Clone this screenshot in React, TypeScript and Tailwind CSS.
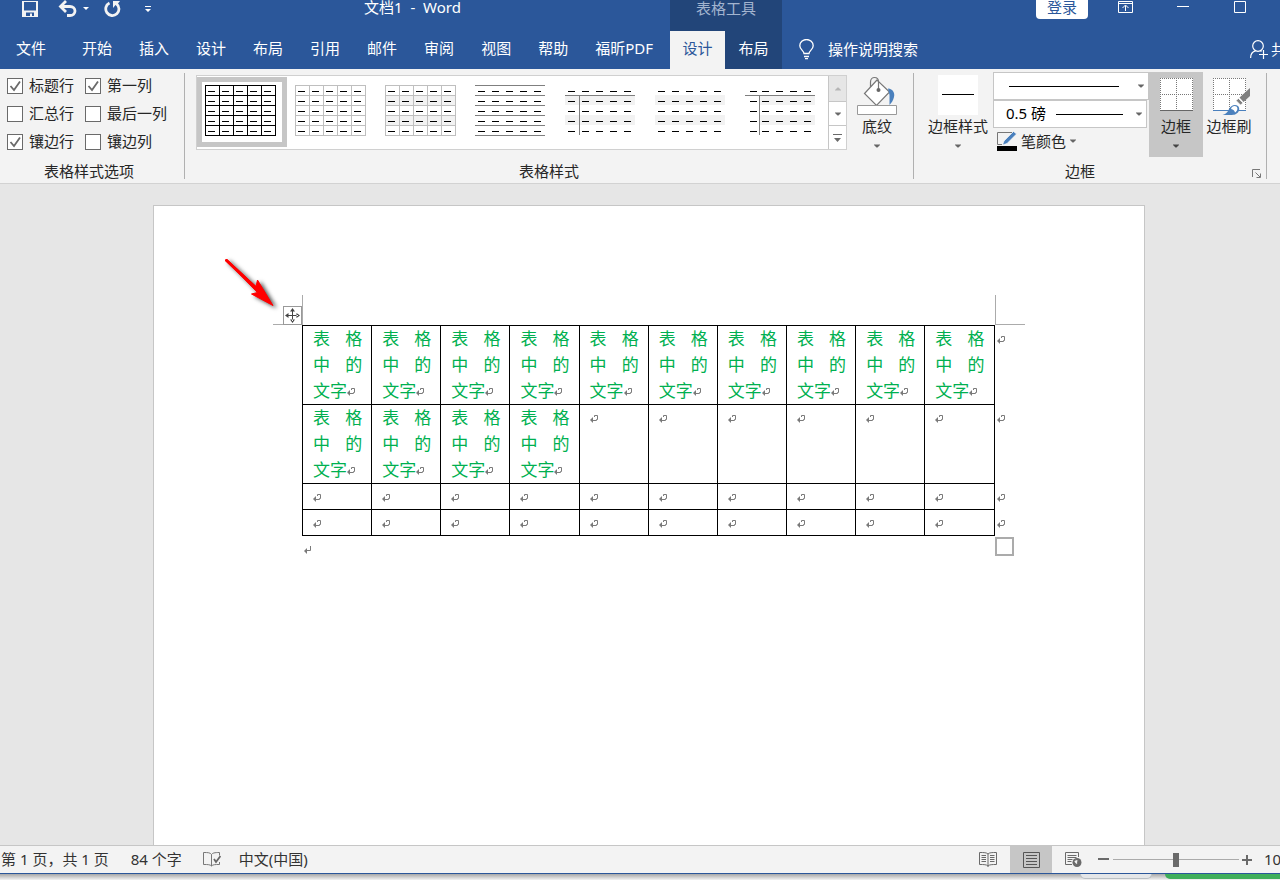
import React from 'react';

const TABS = ['开始', '插入', '设计', '布局', '引用', '邮件', '审阅', '视图', '帮助', '福昕PDF'];

const OPTIONS = [
  { label: '标题行', on: true },
  { label: '第一列', on: true },
  { label: '汇总行', on: false },
  { label: '最后一列', on: false },
  { label: '镶边行', on: true },
  { label: '镶边列', on: false },
];

type Style = { name: string; grid?: string; rows?: string; header?: boolean; bands?: boolean; inset?: boolean };

const STYLES: Style[] = [
  { name: '网格型', grid: '#000000' },
  { name: '网格型浅色', grid: '#bfbfbf' },
  { name: '无格式表格 1', grid: '#bfbfbf', bands: true },
  { name: '无格式表格 2', rows: '#7f7f7f' },
  { name: '无格式表格 3', header: true, bands: true },
  { name: '无格式表格 4', bands: true },
  { name: '无格式表格 5', header: true, bands: true, inset: true },
];

const CELL = '表格中的文字';
const ROWS: string[][] = [
  Array(10).fill(CELL),
  [...Array(4).fill(CELL), ...Array(6).fill('')],
  Array(10).fill(''),
  Array(10).fill(''),
];

const STEPS = [0, 1, 2, 3, 4];
const LINES = [0, 1, 2, 3, 4, 5];

function Thumb({ style }: { style: Style }) {
  return (
    <svg width="71" height="51" viewBox="0 0 71 51" shapeRendering="crispEdges" aria-hidden="true">
      {style.bands &&
        [10, 30].map((y) => (
          <rect key={y} x={style.inset ? 15 : 0} y={y} width={style.inset ? 55 : 70} height="10" fill="#f2f2f2" />
        ))}
      {style.grid &&
        LINES.map((i) => (
          <g key={i} fill={style.grid}>
            <rect x="0" y={i * 10} width="71" height="1" />
            <rect x={i * 14} y="0" width="1" height="51" />
          </g>
        ))}
      {style.rows && LINES.map((i) => <rect key={i} x="0" y={i * 10} width="70" height="1" fill={style.rows} />)}
      {style.header && (
        <g fill="#7f7f7f">
          <rect x="0" y="10" width="70" height="1" />
          <rect x="14" y="10" width="1" height="40" />
        </g>
      )}
      {STEPS.map((r) =>
        STEPS.map((c) => (
          <rect key={`${r}${c}`} x={c * 14 + (style.inset && c === 0 ? 5 : 3)} y={r * 10 + 6} width="7" height="1" fill="#000" />
        )),
      )}
    </svg>
  );
}

function Caret({ className = '' }: { className?: string }) {
  return (
    <svg className={className} width="6" height="4" viewBox="0 0 6 4" aria-hidden="true">
      <path d="M0 .5h6v.5L3.500 3.500h-1L0 1z" fill="currentColor" />
    </svg>
  );
}

function Mark({ plain = false }: { plain?: boolean }) {
  return (
    <svg className="inline-block align-baseline" width="8" height="9" viewBox="0 0 8 9" fill="none" aria-hidden="true">
      <path d={plain ? 'M6.500 0v4.500H2' : 'M4.500 2V.500h3v4H6.500V5.500H2'} stroke="#7a7a7a" />
      <path d="M0 5L3 2v6z" fill="#7a7a7a" />
    </svg>
  );
}

function DottedGrid() {
  return (
    <g shapeRendering="crispEdges">
      <rect x="0" y="0" width="33" height="33" fill="#fff" />
      <path d="M0 .5h33M0 16.5h33M.5 0v32M16.5 0v32M32.5 0v32" stroke="#777" strokeDasharray="1 1" fill="none" />
    </g>
  );
}

function Header() {
  return (
    <header className="flex overflow-hidden bg-[#2b579a] text-white">
      <div className="flex w-[670px] shrink-0 flex-col">
        <div className="flex h-[31px] items-start">
          <button type="button" aria-label="保存" className="ml-[22px]">
            <svg width="16" height="17" viewBox="0 0 16 17" fill="none">
              <path d="M0 1h16v16H0z" fill="#f3f3f3" />
              <path d="M2 2h12v8.500H2zM4 12.500h8V16h-2v-2.500H8V16H4z" fill="#2b579a" />
            </svg>
          </button>
          <button type="button" aria-label="撤消" className="ml-5 flex items-center gap-[6px]">
            <svg width="19" height="17" viewBox="0 0 19 17" fill="none">
              <path d="M4 6.500h8c3 0 5 2 5 4.500s-2 4.500-5 4.500H9" stroke="#f3f3f3" strokeWidth="2.800" />
              <path d="M8 1L2.500 6.500 8 12" stroke="#f3f3f3" strokeWidth="2.800" />
            </svg>
            <svg width="6" height="3" viewBox="0 0 6 3"><path d="M0 0h6L3 3z" fill="#fff" /></svg>
          </button>
          <button type="button" aria-label="重复" className="ml-[15px]">
            <svg width="17" height="17" viewBox="0 0 17 17" fill="none">
              <path d="M5.500 3A6.600 6.600 0 1 0 12.500 3.800" stroke="#f3f3f3" strokeWidth="2.800" />
              <path d="M9 1h7L14 3.500V5h-2.500l-2.500 3z" fill="#f3f3f3" />
            </svg>
          </button>
          <button type="button" aria-label="自定义快速访问工具栏" className="ml-6 mt-[6px]">
            <svg width="6" height="6" viewBox="0 0 6 6"><path d="M0 0h6v1H0zM0 3h6L3 6z" fill="#fff" /></svg>
          </button>
          <h1 className="ml-[213px] whitespace-pre text-[15px] leading-[14px]">文档1  -  Word</h1>
        </div>
        <nav className="flex h-[38px] items-center gap-[27px] pb-1 pl-4 text-[15px] leading-5">
          <a href="#file" className="mr-[9px]">文件</a>
          {TABS.map((t) => (
            <a key={t} href={`#${t}`} className="whitespace-nowrap">{t}</a>
          ))}
        </nav>
      </div>
      <div className="flex w-28 shrink-0 flex-col bg-[#224579] text-[15px]">
        <div className="h-[31px] text-center leading-4 text-[#a3b4cf]">表格工具</div>
        <nav className="flex h-[38px] leading-[34px]">
          <a href="#table-design" className="w-[55px] bg-[#f3f3f3] text-center text-[#2b579a]">设计</a>
          <a href="#table-layout" className="w-[57px] text-center">布局</a>
        </nav>
      </div>
      <div className="flex min-w-0 flex-1 flex-col text-[15px]">
        <div className="flex h-[31px] items-start justify-end pr-[34px]">
          <button type="button" className="h-[19px] w-[52px] rounded-b-sm bg-white pb-[5px] leading-[14px] text-[#2b579a]">登录</button>
          <button type="button" aria-label="功能区显示选项" className="ml-[30px] mt-px">
            <svg width="15" height="12" viewBox="0 0 15 12" fill="none" stroke="#fff">
              <path d="M.5.500h14v11H.5zM.5 2.500h14M7.500 10V4.500M4.500 7l3-3 3 3" />
            </svg>
          </button>
          <button type="button" aria-label="最小化" className="ml-11 mt-[6px]">
            <svg width="12" height="1" viewBox="0 0 12 1"><path d="M0 0h12v1H0z" fill="#fff" /></svg>
          </button>
          <button type="button" aria-label="最大化" className="ml-[45px] mt-px">
            <svg width="12" height="12" viewBox="0 0 12 12" fill="none"><path d="M.5.500h11v11H.5z" stroke="#fff" /></svg>
          </button>
        </div>
        <div className="flex h-[38px] items-center pb-[2px] pl-4 leading-5">
          <button type="button" className="flex items-center gap-[13px] whitespace-nowrap">
            <svg width="17" height="21" viewBox="0 0 17 21" fill="none" stroke="#fff" strokeWidth="1.300">
              <path d="M6 14.500c0-2.500-4.200-4-4.200-7.700a6.700 6.300 0 0 1 13.400 0c0 3.700-4.200 5.200-4.200 7.700zM6 17.500h5M7 19.700h3" />
            </svg>
            操作说明搜索
          </button>
          <button type="button" className="ml-auto flex w-[30px] shrink-0 items-center gap-[3px] overflow-hidden whitespace-nowrap">
            <svg className="shrink-0" width="18" height="19" viewBox="0 0 18 19" fill="none" stroke="#fff" strokeWidth="1.200">
              <circle cx="8" cy="6" r="5.300" />
              <path d="M.6 18c0-4 2-6.500 5-7.200M10.500 10.800l1 .7M13.500 10v9M9 14.500h9" />
            </svg>
            共享
          </button>
        </div>
      </div>
    </header>
  );
}

function GroupLabel({ children }: { children: React.ReactNode }) {
  return <div className="h-5 flex-1 text-center leading-[18px]">{children}</div>;
}

function Divider() {
  return <div className="my-1 w-px shrink-0 bg-[#b0b0b0]" />;
}

function Ribbon() {
  return (
    <section className="flex h-[115px] overflow-hidden border-b border-[#d2d2d2] bg-[#f3f3f3] text-[15px] text-[#262626]">
      <div className="flex w-[184px] shrink-0 flex-col pt-[3px]">
        <div className="grid h-[90px] grid-cols-[78px_1fr] content-start pl-[7px]">
          {OPTIONS.map((o) => (
            <label key={o.label} className="flex h-7 items-center gap-[6px] whitespace-nowrap leading-5">
              <span className="grid">
                <input
                  type="checkbox"
                  defaultChecked={o.on}
                  className="peer col-start-1 row-start-1 size-4 appearance-none border border-[#6a6a6a] bg-white"
                />
                <svg className="pointer-events-none col-start-1 row-start-1 hidden peer-checked:block" width="16" height="16" viewBox="0 0 16 16" fill="none">
                  <path d="M3.500 8l3.500 4 6-8.500" stroke="#6a6a6a" strokeWidth="1.800" />
                </svg>
              </span>
              <span className="pb-[2px]">{o.label}</span>
            </label>
          ))}
        </div>
        <div className="flex pr-[6px]"><GroupLabel>表格样式选项</GroupLabel></div>
      </div>
      <Divider />
      <div className="flex w-[728px] shrink-0 flex-col pt-[3px]">
        <div className="flex h-[90px] items-start pl-[11px]">
          <div className="mt-[3px] flex h-[75px] border border-[#d0d0d0] bg-white">
            <div className="flex w-[631px] pt-px">
              {STYLES.map((s, i) => (
                <button
                  key={s.name}
                  type="button"
                  aria-label={s.name}
                  className={
                    i === 0
                      ? 'flex h-[70px] w-[90px] border-[5px] border-[#c6c6c6] pl-[3px] pt-[3px]'
                      : 'flex h-[70px] w-[90px] pl-2 pt-2'
                  }
                >
                  <Thumb style={s} />
                </button>
              ))}
            </div>
            <div className="flex w-[18px] flex-col divide-y divide-[#c6c6c6] border-l border-[#c6c6c6] text-[#6a6a6a]">
              <button type="button" aria-label="上一行" className="flex h-[26px] items-center justify-center bg-[#e6e6e6] text-[#b5b5b5]">
                <Caret className="rotate-180" />
              </button>
              <button type="button" aria-label="下一行" className="flex flex-1 items-center justify-center"><Caret /></button>
              <button type="button" aria-label="其他" className="flex flex-1 items-center justify-center">
                <svg width="9" height="8" viewBox="0 0 9 8" fill="currentColor"><path d="M0 0h9v1H0zM1 4h7L4.500 8z" /></svg>
              </button>
            </div>
          </div>
          <button type="button" className="ml-[10px] mt-1 flex w-10 flex-col items-center leading-5 text-[#262626]">
            <svg width="40" height="40" viewBox="0 0 40 40" fill="none">
              <path d="M20 4L7.500 17.500 19.500 29.500 32.500 16z" fill="#fff" stroke="#777" strokeWidth="1.200" />
              <path d="M13.500 11V6c0-6 8-6 8 0v8" stroke="#777" strokeWidth="1.200" />
              <circle cx="21.500" cy="14" r="2" fill="#666" />
              <path d="M31 12.500c5 .5 7 4.500 6 8.500-.6 3-2.500 6-4.500 8V19z" fill="#4a80bd" />
              <path d="M.5 29.500h39v9H.5z" fill="#fff" stroke="#999" />
            </svg>
            底纹
            <Caret className="mt-2 text-[#666]" />
          </button>
        </div>
        <div className="flex"><GroupLabel>表格样式</GroupLabel></div>
      </div>
      <Divider />
      <div className="flex w-[352px] shrink-0 flex-col pt-[3px]">
        <div className="flex h-[90px] items-start">
          <button type="button" className="ml-[13px] mt-[3px] flex w-[62px] flex-col items-center whitespace-nowrap leading-5">
            <svg width="40" height="40" viewBox="0 0 40 40" shapeRendering="crispEdges">
              <path d="M0 0h40v40H0z" fill="#fff" />
              <path d="M4 19h32v1H4z" fill="#000" />
            </svg>
            <span className="mt-px">边框样式</span>
            <Caret className="mt-2 text-[#666]" />
          </button>
          <div className="ml-1 w-[156px]">
            <div className="grid items-center">
              <select aria-label="笔样式" className="col-start-1 row-start-1 h-7 appearance-none border border-[#c6c6c6] bg-white">
                <option aria-label="单实线" value="solid" />
              </select>
              <div className="pointer-events-none col-start-1 row-start-1 flex items-center justify-between pl-4 pr-[5px] text-[#666]">
                <div className="h-px w-[110px] bg-black" />
                <Caret />
              </div>
            </div>
            <div className="mr-[2px] grid items-center">
              <select aria-label="笔划粗细" className="col-start-1 row-start-1 h-7 appearance-none border border-[#c6c6c6] bg-white pb-[2px] pl-3 text-[15px] text-black">
                <option>0.5 磅</option>
              </select>
              <div className="pointer-events-none col-start-1 row-start-1 flex items-center justify-between pl-[63px] pr-[5px] text-[#666]">
                <div className="h-px w-[67px] bg-black" />
                <Caret />
              </div>
            </div>
            <button type="button" className="ml-1 mt-[3px] flex items-center gap-1 leading-5">
              <svg width="20" height="20" viewBox="0 0 20 20" fill="none">
                <path d="M15 1.500H.5v12H5" stroke="#777" />
                <path d="M5.500 14l1.500-4L16.500.5l3 2.500L10 12.500z" fill="#4a80bd" stroke="#fff" strokeWidth=".6" />
                <path d="M0 15h20v5H0z" fill="#000" />
              </svg>
              笔颜色
              <Caret className="text-[#666]" />
            </button>
          </div>
          <button type="button" className="flex h-[85px] w-[54px] flex-col items-center bg-[#c6c6c6] pt-[6px] leading-5">
            <svg width="33" height="38" viewBox="0 0 33 38">
              <DottedGrid />
              <path d="M0 32h33v1H0z" fill="#666" />
            </svg>
            边框
            <Caret className="mt-2 text-[#444]" />
          </button>
          <button type="button" className="flex w-[52px] flex-col items-center whitespace-nowrap pt-[6px] leading-5">
            <svg className="ml-1" width="37" height="38" viewBox="0 0 37 38">
              <DottedGrid />
              <path d="M0 32h33v1H0z" fill="#4a80bd" />
              <path d="M37 10v8l-6.500 6-4-4.500z" fill="#7f7f7f" />
              <path d="M25.500 20.500l4.500 4.500-2.500 2-4.500-4.500z" fill="#7f7f7f" stroke="#fff" strokeWidth=".7" />
              <path d="M9.500 37c4-1 5.500-3.500 6.500-6 1.500-3.500 6-5.500 9-3 2.500 2.500 1 7-2.500 8.200-1.500.6-3 .8-5 .8z" fill="#4a80bd" />
              <path d="M18 31c.5-2.500 3.500-4 5.500-2.500 1.800 1.500.8 5-1.500 6-.5-2-1.500-3-4-3.500z" fill="#fff" />
            </svg>
            边框刷
          </button>
        </div>
        <div className="flex items-center">
          <GroupLabel>边框</GroupLabel>
          <button type="button" aria-label="边框和底纹" className="ml-[6px] mr-[5px] mt-[2px]">
            <svg width="9" height="9" viewBox="0 0 9 9" fill="none" stroke="#777">
              <path d="M8 .5H.5V8M3.500 3.500L8 8M8.500 4.500v4h-4" />
            </svg>
          </button>
        </div>
      </div>
      <Divider />
    </section>
  );
}

function Document() {
  return (
    <main className="flex flex-1 bg-[#e6e6e6] pl-[153px] pr-[135px] pt-[21px]">
      <article className="relative flex-1 border border-b-0 border-[#c6c6c6] bg-white pl-[148px] pr-[130px] pt-[119px]">
        <svg className="absolute left-[66px] top-[48px] drop-shadow-[3px_2px_2px_rgba(0,0,0,0.7)]" width="60" height="60" viewBox="0 0 60 60" aria-hidden="true">
          <path d="M5.500 6L7 5.500l29 27 1.500-6.500L53 51.500 31.500 40l6-1.500z" fill="#f00" stroke="#f00" strokeLinejoin="round" />
          <path d="M6.500 6.500L38 36" stroke="#f00" strokeWidth="3" strokeLinecap="round" />
        </svg>
        <div className="relative">
          <div className="absolute -left-[29px] -top-[30px] size-[30px] border-b border-r border-[#ababab]" />
          <div className="absolute -right-[11px] -top-[30px] size-[30px] border-b border-l border-[#ababab]" />
          <button type="button" aria-label="移动表格" className="absolute -left-[19px] -top-[19px] border border-[#999] bg-white p-px">
            <svg width="15" height="15" viewBox="0 0 15 15">
              <path d="M7 2h1v11H7zM2 7h11v1H2zM7.500 0L10 3.500H5zM7.500 15L10 11.500H5zM0 7.500L3.500 5v5zM15 7.500L11.500 5v5z" fill="#444" />
            </svg>
          </button>
          <table className="w-full table-fixed border-collapse text-[17px] text-[#00b050]">
            <colgroup>
              {ROWS[0].map((_, i) => <col key={i} />)}
              <col className="w-5" />
            </colgroup>
            <tbody>
              {ROWS.map((row, r) => (
                <tr key={r} className={row[0] ? 'leading-[26px]' : 'leading-[25px]'}>
                  {row.map((text, c) => (
                    <td key={c} className="border border-black p-0 pl-[10px] pr-[9px] text-justify align-top">
                      {text}
                      <Mark />
                    </td>
                  ))}
                  <td className="p-0 pl-[2px] align-top"><Mark /></td>
                </tr>
              ))}
            </tbody>
          </table>
          <p className="pl-[2px] text-[17px] leading-[26px]"><Mark plain /></p>
          <div className="absolute bottom-[6px] right-0 size-[19px] border-2 border-[#ababab] bg-white" />
        </div>
      </article>
    </main>
  );
}

function StatusBar() {
  return (
    <footer className="overflow-hidden bg-[#ededed] text-[15px] text-[#333]">
      <div className="flex h-[29px] items-center whitespace-nowrap border-b border-t border-b-[#2b579a] border-t-[#c6c6c6] bg-[#f3f3f3] leading-5">
        <span className="pb-[2px] pl-px">第 1 页，共 1 页</span>
        <span className="ml-[22px] pb-[2px]">84 个字</span>
        <button type="button" aria-label="校对" className="ml-[21px]">
          <svg width="18" height="15" viewBox="0 0 18 15" fill="none" stroke="#777">
            <path d="M8.500 2.500C7 .5 5 .5.5.500v12c4.500 0 6.500 0 8 1.500V2.500c1-1.500 3-2 8-2v3M8.500 14c1.500-1.500 3.500-1.500 8-1.500V10" />
            <path d="M11 7l2 3 4.500-6" stroke="#666" strokeWidth="1.800" />
          </svg>
        </button>
        <span className="ml-[18px] pb-[2px]">中文(中国)</span>
        <button type="button" aria-label="阅读视图" className="ml-auto mr-[13px]">
          <svg width="18" height="15" viewBox="0 0 18 15" fill="none" stroke="#6a6a6a">
            <path d="M9 2C7.500.5 5 .5.5.500v12c4.500 0 7 0 8.500 1.500 1.500-1.500 4-1.500 8.500-1.500V.5C13 .5 10.500.5 9 2zM9 2v13M2.500 3.500H7M2.500 5.500H7M2.500 7.500H7M2.500 9.500H7M11 3.500h4.500M11 5.500h4.500M11 7.500h4.500M11 9.500h4.500" />
          </svg>
        </button>
        <button type="button" aria-label="页面视图" className="flex h-[27px] w-[42px] items-center justify-center bg-[#c6c6c6]">
          <svg width="17" height="16" viewBox="0 0 17 16" fill="none" stroke="#555">
            <path d="M.5.500h16v15H.5zM3 3.500h11M3 6.500h11M3 9.500h11M3 12.500h11" />
          </svg>
        </button>
        <button type="button" aria-label="Web 版式视图" className="ml-[13px]">
          <svg width="17" height="16" viewBox="0 0 17 16" fill="none" stroke="#6a6a6a">
            <path d="M13.500 5V.5H.5v12H7M2.500 3.500h9M2.500 5.500h9M2.500 7.500h5M2.500 9.500h4" />
            <circle cx="12" cy="10.500" r="4.500" fill="#6a6a6a" stroke="none" />
            <path d="M9 9.500l2-2 2.500 1-1 1.500.5 1.500-2 1zM13.500 12.500l1.500-1" fill="#f3f3f3" />
          </svg>
        </button>
        <button type="button" aria-label="缩小" className="ml-4">
          <svg width="11" height="11" viewBox="0 0 11 11"><path d="M0 4h11v2H0z" fill="#6a6a6a" /></svg>
        </button>
        <input
          type="range"
          aria-label="缩放"
          defaultValue={50}
          className="ml-1 h-[15px] w-[126px] appearance-none bg-[linear-gradient(#ababab,#ababab)] bg-[length:100%_1px] bg-center bg-no-repeat [&::-webkit-slider-thumb]:h-[14px] [&::-webkit-slider-thumb]:w-[6px] [&::-webkit-slider-thumb]:appearance-none [&::-webkit-slider-thumb]:bg-[#6a6a6a]"
        />
        <button type="button" aria-label="放大" className="ml-[3px]">
          <svg width="10" height="10" viewBox="0 0 10 10"><path d="M4 0h2v10H4zM0 4h10v2H0z" fill="#6a6a6a" /></svg>
        </button>
        <span className="ml-[12px] w-4 overflow-hidden pb-[2px]">100%</span>
      </div>
      <div className="flex h-[6px] items-start justify-end bg-linear-to-b from-[#a8a8a8] to-[#f4f4f4]">
        <div className="mr-[13px] h-[5px] w-[72px] rounded-b-lg border border-t-0 border-[#b9bfc4] bg-[#e4e6e8]" />
        <div className="h-[5px] w-[115px] rounded-bl-md bg-[#3fae5a]" />
      </div>
    </footer>
  );
}

export default function App() {
  return (
    <div className="flex min-h-screen flex-col font-['Noto_Sans','Noto_Sans_CJK_SC',sans-serif]">
      <Header />
      <Ribbon />
      <Document />
      <StatusBar />
    </div>
  );
}
